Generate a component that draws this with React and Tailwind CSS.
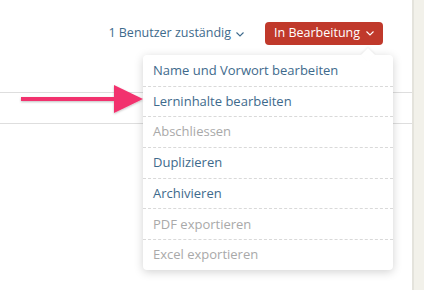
import React from "react";

const items = [
    { label: "Name und Vorwort bearbeiten", enabled: true },
    { label: "Lerninhalte bearbeiten", enabled: true },
    { label: "Abschliessen", enabled: false },
    { label: "Duplizieren", enabled: true },
    { label: "Archivieren", enabled: true },
    { label: "PDF exportieren", enabled: false },
    { label: "Excel exportieren", enabled: false },
];

function Chevron({ className }) {
    return (
        <svg className={className} width="8" height="5" viewBox="0 0 8 5" fill="none">
            <polyline points="0.5,0.5 4,4 7.5,0.5" stroke="currentColor" strokeWidth="1.1" />
        </svg>
    );
}

export default function App() {
    return (
        <div className="flex w-[424px] h-[290px] bg-white overflow-hidden" style={{ fontFamily: "'Open Sans', sans-serif" }}>
            <div className="relative flex-1">
                {/* header */}
                <div className="flex items-center justify-end gap-[21px] pt-[22px] pr-[29px]">
                    <button className="flex items-center gap-[5px] text-[12.5px] text-[#3e6a8c]">
                        <span>1 Benutzer zuständig</span>
                        <Chevron className="mt-[1px]" />
                    </button>
                    <button className="flex items-center gap-[6px] h-[23px] px-[9px] rounded-[4px] bg-[#c0392b] text-white text-[12.5px] font-medium">
                        <span>In Bearbeitung</span>
                        <Chevron />
                    </button>
                </div>

                {/* list row behind the menu */}
                <div className="mt-[47px] h-[32px] border-y border-[#dedede]" />

                {/* dropdown */}
                <div className="absolute left-[143px] top-[55px] w-[250px] bg-white rounded-[4px] shadow-[0_2px_10px_rgba(0,0,0,0.18)]">
                    <div className="absolute -top-[5px] right-[20px] w-[10px] h-[10px] bg-white rotate-45 shadow-[-1px_-1px_2px_rgba(0,0,0,0.06)]" />
                    {items.map((item, i) => (
                        <div
                            key={item.label}
                            className={
                                "relative h-[30.7px] flex items-center px-[10px] text-[13px] " +
                                (i > 0 ? "border-t border-dashed border-[#d9d9d9] " : "") +
                                (item.enabled ? "text-[#3e6a8c]" : "text-[#a9a9a9]")
                            }
                        >
                            {item.label}
                        </div>
                    ))}
                </div>

                {/* annotation arrow */}
                <svg className="absolute left-0 top-[80px]" width="150" height="40" viewBox="0 0 150 40">
                    <defs>
                        <filter id="sh" x="-10%" y="-30%" width="120%" height="160%">
                            <feDropShadow dx="0" dy="1" stdDeviation="1" floodColor="#000" floodOpacity="0.25" />
                        </filter>
                    </defs>
                    <g filter="url(#sh)" fill="#f2336e">
                        <rect x="21" y="17" width="96" height="4" />
                        <polygon points="114,5 143,19 114,33" />
                    </g>
                </svg>
            </div>
            <div className="w-[12px] border-l-2 border-[#e4e3dc] bg-[#f2f1ea]" />
        </div>
    );
}
